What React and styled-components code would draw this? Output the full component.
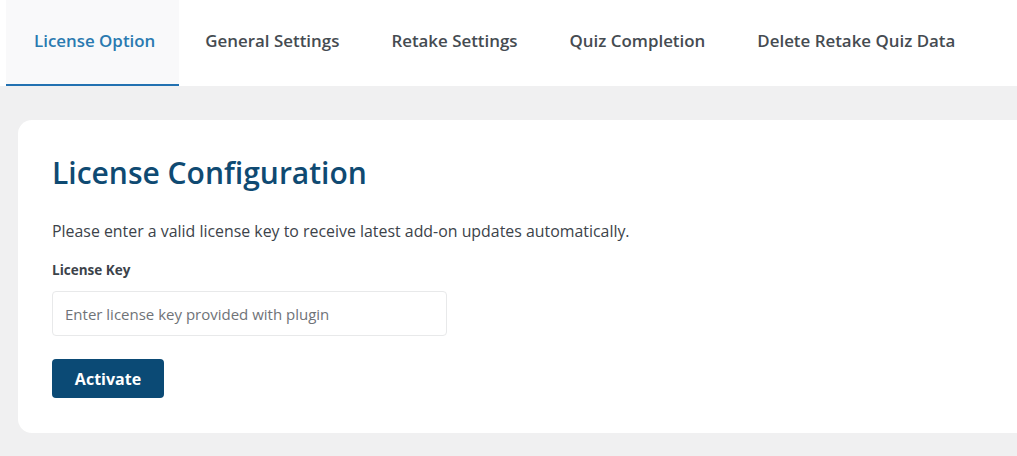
import React from "react";
import styled, { createGlobalStyle } from "styled-components";

const Global = createGlobalStyle`
  html, body { margin: 0; padding: 0; background: #f0f0f1; overflow: hidden; }
  body { font-family: "Open Sans", "Noto Sans", sans-serif; }
  * { box-sizing: border-box; }
`;

const Page = styled.div`
  width: 1017px;
  height: 456px;
  background: #f0f0f1;
  display: flex;
  flex-direction: column;
`;

const Nav = styled.nav`
  display: flex;
  height: 86px;
  background: #ffffff;
  padding-left: 6px;
`;

const Tab = styled.div`
  display: flex;
  align-items: center;
  padding-left: ${(p) => (p.$active ? 28 : 26)}px;
  padding-right: ${(p) => (p.$active ? 24 : 26)}px;
  padding-bottom: 4px;
  font-size: 16.9px;
  font-weight: 600;
  color: ${(p) => (p.$active ? "#2a7ab0" : "#454b51")};
  background: ${(p) => (p.$active ? "#f9f9fa" : "transparent")};
  border-bottom: 2px solid ${(p) => (p.$active ? "#2271b1" : "transparent")};
  white-space: nowrap;
`;

const Body = styled.main`
  flex: 1;
  padding: 34px 0 0 18px;
`;

const Card = styled.section`
  width: 1040px;
  background: #ffffff;
  border-radius: 14px;
  padding: 32px 34px 35px;
`;

const Title = styled.h1`
  margin: 0;
  font-size: 30px;
  line-height: 42px;
  font-weight: 600;
  color: #0f4a72;
`;

const Intro = styled.p`
  margin: 26px 0 0;
  font-size: 15.9px;
  line-height: 22px;
  color: #3c434a;
`;

const Label = styled.label`
  display: block;
  margin-top: 18px;
  font-size: 13.5px;
  line-height: 20px;
  font-weight: 700;
  color: #3c434a;
`;

const Input = styled.input`
  display: block;
  margin-top: 11px;
  width: 395px;
  height: 45px;
  padding: 0 12px;
  border: 1px solid #e8e9ea;
  border-radius: 4px;
  font-family: inherit;
  font-size: 15px;
  color: #3c434a;
  outline: none;
  &::placeholder { color: #6f7378; }
`;

const Button = styled.button`
  display: block;
  margin-top: 23px;
  width: 112px;
  height: 39px;
  border: none;
  border-radius: 4px;
  background: #0b4a75;
  color: #ffffff;
  font-family: inherit;
  font-size: 16px;
  font-weight: 700;
  cursor: pointer;
`;

const tabs = [
  "License Option",
  "General Settings",
  "Retake Settings",
  "Quiz Completion",
  "Delete Retake Quiz Data",
];

export default function App() {
  return (
    <Page>
      <Global />
      <Nav>
        {tabs.map((t, i) => (
          <Tab key={t} $active={i === 0}>
            {t}
          </Tab>
        ))}
      </Nav>
      <Body>
        <Card>
          <Title>License Configuration</Title>
          <Intro>
            Please enter a valid license key to receive latest add-on updates automatically.
          </Intro>
          <Label htmlFor="lk">License Key</Label>
          <Input id="lk" placeholder="Enter license key provided with plugin" />
          <Button>Activate</Button>
        </Card>
      </Body>
    </Page>
  );
}
